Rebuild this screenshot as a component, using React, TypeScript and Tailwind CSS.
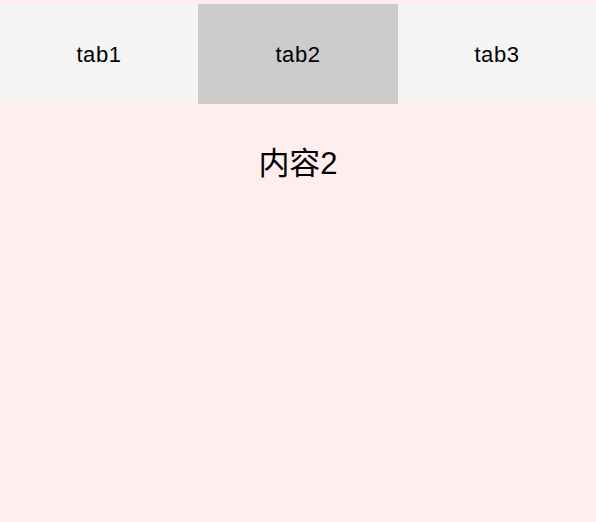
const tabs = ["tab1", "tab2", "tab3"];

const widths = ["w-[198px]", "w-[200px]", "w-[198px]"];

export default function App() {
  const active = 1;

  return (
    <div
      className="h-[522px] w-[596px] bg-[#ffeeee] pt-[4px] text-black"
      style={{ fontFamily: '"Liberation Sans", "Noto Sans CJK SC", sans-serif' }}
    >
      <div className="flex h-[100px]">
        {tabs.map((tab, i) => (
          <div
            key={tab}
            className={`${widths[i]} flex items-center justify-center text-[22px] tracking-[0.6px] ${
              i === active ? "bg-[#cccccc]" : "bg-[#f5f5f5]"
            }`}
          >
            {tab}
          </div>
        ))}
      </div>

      <div className="flex justify-center pt-[42px] text-[31px] leading-[36px]">
        内容2
      </div>
    </div>
  );
}
